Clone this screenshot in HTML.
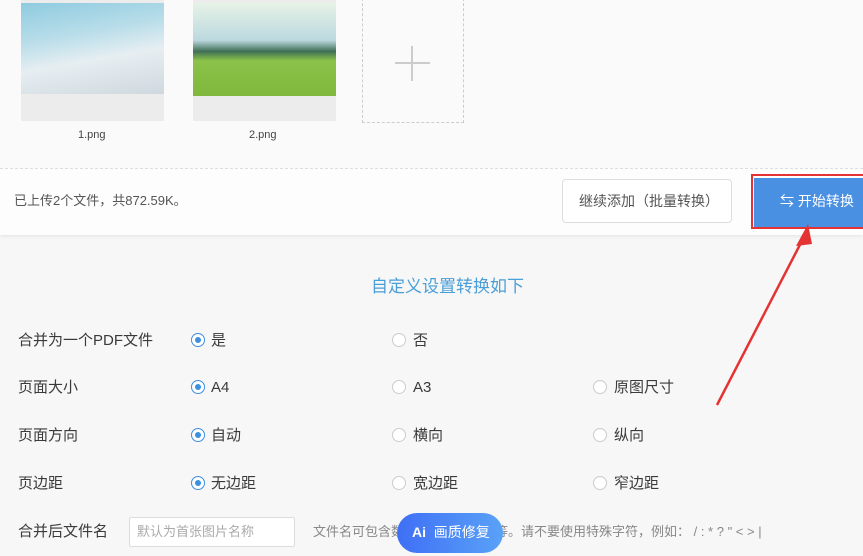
<!DOCTYPE html>
<html><head><meta charset="utf-8"><style>
body{margin:0;width:863px;height:556px;overflow:hidden;background:#f7f7f7;font-family:"Liberation Sans","Noto Sans CJK SC",sans-serif;position:relative}
.a{position:absolute}
.top{left:0;top:0;width:863px;height:168px;background:#fafafa}
.bar{left:0;top:168px;width:863px;height:66px;background:#fdfdfd;border-top:1px dashed #ddd;box-shadow:0 2px 3px rgba(0,0,0,.06)}
.t{font-size:15px;color:#3a3a3a;white-space:nowrap;line-height:20px}
.r{width:12px;height:12px;border:1px solid #ccc;border-radius:50%;background:#fff}
.r.on{border-color:#3d8fe0}
.r.on::after{content:"";position:absolute;left:3px;top:3px;width:6px;height:6px;border-radius:50%;background:#3d8fe0}
</style></head><body>
<div class="a top"></div>
<div class="a" style="left:21px;top:0;width:143px;height:121px;background:#ececec"></div>
<div class="a" style="left:21px;top:3px;width:143px;height:91px;background:linear-gradient(170deg,#8ecbe0 0%,#b8dde9 35%,#e6eef2 60%,#cfd8de 100%)"></div>
<div class="a" style="left:193px;top:0;width:143px;height:121px;background:#ececec"></div>
<div class="a" style="left:193px;top:3px;width:143px;height:93px;background:linear-gradient(180deg,#e6f2e6 0%,#bcd9e0 40%,#3f6f55 52%,#8bc24a 62%,#7fb83c 100%)"></div>
<div class="a" style="left:362px;top:-2px;width:100px;height:123px;border:1px dashed #ccc"></div>
<div class="a" style="left:395px;top:62px;width:35px;height:2px;background:#ccc"></div>
<div class="a" style="left:411px;top:46px;width:2px;height:35px;background:#ccc"></div>
<div class="a t" style="left:78px;top:125px;font-size:11px;color:#444">1.png</div>
<div class="a t" style="left:249px;top:125px;font-size:11px;color:#444">2.png</div>
<div class="a bar"></div>
<div class="a t" style="left:14px;top:191px;font-size:13px;color:#555">已上传2个文件，共872.59K。</div>
<div class="a" style="left:562px;top:179px;width:168px;height:42px;border:1px solid #ddd;border-radius:4px;background:#fff"></div>
<div class="a t" style="left:579px;top:191px;font-size:14px;color:#555">继续添加（批量转换）</div>
<div class="a" style="left:751px;top:174px;width:112px;height:55px;border:2px solid #e53333;box-sizing:border-box;border-right:none"></div>
<div class="a" style="left:754px;top:178px;width:109px;height:49px;background:#4a90e2"></div>
<div class="a t" style="left:780px;top:191px;font-size:14px;color:#fff">⇆ 开始转换</div>
<svg class="a" style="left:700px;top:210px" width="120" height="200"><line x1="17" y1="195" x2="105" y2="25" stroke="#e53333" stroke-width="2.5"/><polygon points="108,14 96,36 112,34" fill="#e53333"/></svg>
<div class="a t" style="left:371px;top:277px;font-size:17px;color:#4a9fd8">自定义设置转换如下</div>
<div class="a t" style="left:18px;top:331px">合并为一个PDF文件</div>
<div class="a r on" style="left:191px;top:333px"></div><div class="a t" style="left:211px;top:331px">是</div>
<div class="a r" style="left:392px;top:333px"></div><div class="a t" style="left:413px;top:331px">否</div>
<div class="a t" style="left:18px;top:378px">页面大小</div>
<div class="a r on" style="left:191px;top:380px"></div><div class="a t" style="left:211px;top:378px">A4</div>
<div class="a r" style="left:392px;top:380px"></div><div class="a t" style="left:413px;top:378px">A3</div>
<div class="a r" style="left:593px;top:380px"></div><div class="a t" style="left:614px;top:378px">原图尺寸</div>
<div class="a t" style="left:18px;top:426px">页面方向</div>
<div class="a r on" style="left:191px;top:428px"></div><div class="a t" style="left:211px;top:426px">自动</div>
<div class="a r" style="left:392px;top:428px"></div><div class="a t" style="left:413px;top:426px">横向</div>
<div class="a r" style="left:593px;top:428px"></div><div class="a t" style="left:614px;top:426px">纵向</div>
<div class="a t" style="left:18px;top:474px">页边距</div>
<div class="a r on" style="left:191px;top:476px"></div><div class="a t" style="left:211px;top:474px">无边距</div>
<div class="a r" style="left:392px;top:476px"></div><div class="a t" style="left:413px;top:474px">宽边距</div>
<div class="a r" style="left:593px;top:476px"></div><div class="a t" style="left:614px;top:474px">窄边距</div>
<div class="a t" style="left:18px;top:522px">合并后文件名</div>
<div class="a" style="left:129px;top:517px;width:164px;height:28px;border:1px solid #ddd;border-radius:2px;background:#fff"></div>
<div class="a t" style="left:137px;top:522px;font-size:13px;color:#aaa">默认为首张图片名称</div>
<div class="a t" style="left:313px;top:522px;font-size:13px;color:#888">文件名可包含数字、字母、汉字等。请不要使用特殊字符，例如： / : * ? " &lt; &gt; |</div>
<div class="a" style="left:397px;top:513px;width:106px;height:40px;border-radius:20px;background:linear-gradient(90deg,#3f6ff5,#5aa2f8)"></div>
<div class="a t" style="left:412px;top:522px;font-size:14px;color:#fff"><b>Ai</b>&nbsp; 画质修复</div>
</body></html>
